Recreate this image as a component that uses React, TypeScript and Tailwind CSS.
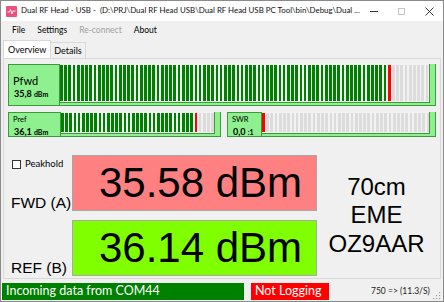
import React from "react";

const ui = { fontFamily: "Lato, 'Noto Sans', sans-serif" };
const arial = { fontFamily: "'Liberation Sans', Arial, sans-serif" };

// segment bar: lit = green count, red index, rest gray
function Bar({ total, lit, red }: { total: number; lit: number; red: number }) {
  const segs = Array.from({ length: total }, (_, i) => i);
  return (
    <div className="flex-1 flex gap-[1.5px] bg-[#f2f2f2] py-[1px] border-r border-b border-[#3c9a3c]">
      {segs.map((i) => (
        <div
          key={i}
          className={
            i === red ? "flex-1 bg-[#ff0000]" : i < lit ? "flex-1 bg-[#008000]" : "flex-1 bg-[#dcdcdc]"
          }
        />
      ))}
    </div>
  );
}

function Meter({
  children,
  labelW,
  total,
  lit,
  red,
  h,
}: {
  children?: React.ReactNode;
  labelW: string;
  total: number;
  lit: number;
  red: number;
  h: string;
}) {
  return (
    <div className={`flex ${h}`}>
      <div className={`${labelW} shrink-0 bg-[#8ef08e] border border-[#3c9a3c] flex flex-col pl-[4px]`}>
        {children}
      </div>
      <div className="flex-1 flex flex-col bg-[#8ef08e] border-r border-b border-[#3c9a3c] pr-[5px] pb-[2px]">
        <Bar total={total} lit={lit} red={red} />
      </div>
    </div>
  );
}

export default function App() {
  return (
    <div className="w-[444px] h-[302px] border border-[#8a8a8a] bg-[#f0f0f0] flex flex-col overflow-hidden text-black" style={ui}>
      {/* title bar */}
      <div className="h-[20px] bg-white flex items-center pl-[5px] shrink-0">
        <svg width="11" height="11" viewBox="0 0 11 11" className="shrink-0">
          <rect width="11" height="11" rx="1" fill="#ee4f7f" />
          <polyline points="1.5,6 3.5,6 4.5,3.5 6,8 7,5 9.5,5" fill="none" stroke="#fff" strokeWidth="0.9" />
        </svg>
        <span className="ml-[4px] text-[7.9px] whitespace-nowrap text-[#111]">
          Dual RF Head - USB -&nbsp; (D:\PRJ\Dual RF Head USB\Dual RF Head USB PC Tool\bin\Debug\Dual ...
        </span>
        <div className="flex-1 flex items-center justify-end pr-[9px] gap-[20px]">
          <div className="w-[8px] h-[1px] bg-[#333]" />
          <div className="w-[7px] h-[7px] border border-[#c4c4c4]" />
          <svg width="9" height="9" viewBox="0 0 9 9">
            <path d="M0.5 0.5 L8.5 8.5 M8.5 0.5 L0.5 8.5" stroke="#222" strokeWidth="0.9" />
          </svg>
        </div>
      </div>

      {/* menu */}
      <div className="h-[18px] flex items-center text-[8.5px] shrink-0 pl-[11px] gap-[12px]">
        <span>File</span>
        <span>Settings</span>
        <span className="text-[#a0a0a0]">Re-connect</span>
        <span>About</span>
      </div>

      {/* tabs */}
      <div className="h-[18px] mt-[1px] flex items-end px-[2px] shrink-0 text-[9px]">
        <div className="h-[18px] px-[4px] bg-white border border-b-0 border-[#d9d9d9] flex items-center">Overview</div>
        <div className="h-[16px] px-[3px] bg-[#f0f0f0] border border-l-0 border-b-0 border-[#d9d9d9] flex items-center">Details</div>
      </div>

      {/* tab page */}
      <div className="h-[221px] mx-[2px] border border-[#d9d9d9] px-[4px] pt-[5px] flex flex-col shrink-0">
        <Meter labelW="w-[52px]" h="h-[42px]" total={88} lit={78} red={78}>
          <span className="text-[11px] leading-none mt-[10px]">Pfwd</span>
          <span className="text-[9px] font-bold leading-none mt-[3px] ml-[1px]">
            35,8 <span className="text-[7px]">dBm</span>
          </span>
        </Meter>

        <div className="flex gap-[6px] mt-[6px]">
          <div className="w-[213px]">
            <Meter labelW="w-[53px]" h="h-[25px]" total={37} lit={32} red={32}>
              <span className="text-[7.5px] leading-none mt-[3px]">Pref</span>
              <span className="text-[9px] font-bold leading-none mt-[3px] ml-[1px]">
                36,1 <span className="text-[7px]">dBm</span>
              </span>
            </Meter>
          </div>
          <div className="flex-1">
            <Meter labelW="w-[35px]" h="h-[25px]" total={40} lit={0} red={0}>
              <span className="text-[7.5px] leading-none mt-[3px]">SWR</span>
              <span className="text-[9px] font-bold leading-none mt-[3px] ml-[1px]">
                0,0 <span className="text-[7px]">:1</span>
              </span>
            </Meter>
          </div>
        </div>

        {/* readouts */}
        <div className="flex mt-[18px]">
          <div className="w-[64px] flex flex-col gap-[9px] pl-[3px] whitespace-nowrap" style={arial}>
            <div className="h-[56px] flex flex-col justify-between">
              <div className="flex items-center gap-[4px] mt-[2px] ml-[1px]" style={ui}>
                <div className="w-[9px] h-[9px] border border-[#333] bg-white" />
                <span className="text-[9.5px]">Peakhold</span>
              </div>
              <span className="text-[15.5px] leading-none mb-[1px]">FWD (A)</span>
            </div>
            <div className="h-[56px] flex flex-col justify-end">
              <span className="text-[15.5px] leading-none mb-[1px]">REF (B)</span>
            </div>
          </div>

          <div className="w-[245px] flex flex-col gap-[9px]" style={arial}>
            <div className="h-[56px] bg-[#ff8080] border border-[#a8a8a8] flex items-center justify-center pl-[12px] text-[42px] leading-none">
              35.58 dBm
            </div>
            <div className="h-[56px] bg-[#80ff00] border border-[#a8a8a8] flex items-center justify-center pl-[12px] text-[42px] leading-none">
              36.14 dBm
            </div>
          </div>

          <div className="flex-1 flex flex-col items-center justify-center text-[24px] leading-[28.5px]" style={arial}>
            <span>70cm</span>
            <span>EME</span>
            <span>OZ9AAR</span>
          </div>
        </div>
      </div>

      {/* status bar */}
      <div className="h-[19px] mt-[3px] flex items-center shrink-0 pl-[1px]">
        <div className="w-[242px] h-[17px] bg-[#008000] text-white text-[12.5px] flex items-center pl-[4px]">
          Incoming data from COM44
        </div>
        <div className="ml-[7px] w-[78px] h-[17px] bg-[#ff0000] text-white text-[12.5px] flex items-center pl-[4px]">
          Not Logging
        </div>
        <div className="ml-[42px] text-[8.5px] text-[#222]">750 =&gt; (11.3/S)</div>
        <svg width="8" height="8" viewBox="0 0 8 8" className="ml-auto mr-[2px] self-end mb-[1px]">
          <g fill="#9a9a9a">
            <rect x="6" y="0" width="1.2" height="1.2" />
            <rect x="3" y="3" width="1.2" height="1.2" />
            <rect x="6" y="3" width="1.2" height="1.2" />
            <rect x="0" y="6" width="1.2" height="1.2" />
            <rect x="3" y="6" width="1.2" height="1.2" />
            <rect x="6" y="6" width="1.2" height="1.2" />
          </g>
        </svg>
      </div>
    </div>
  );
}
